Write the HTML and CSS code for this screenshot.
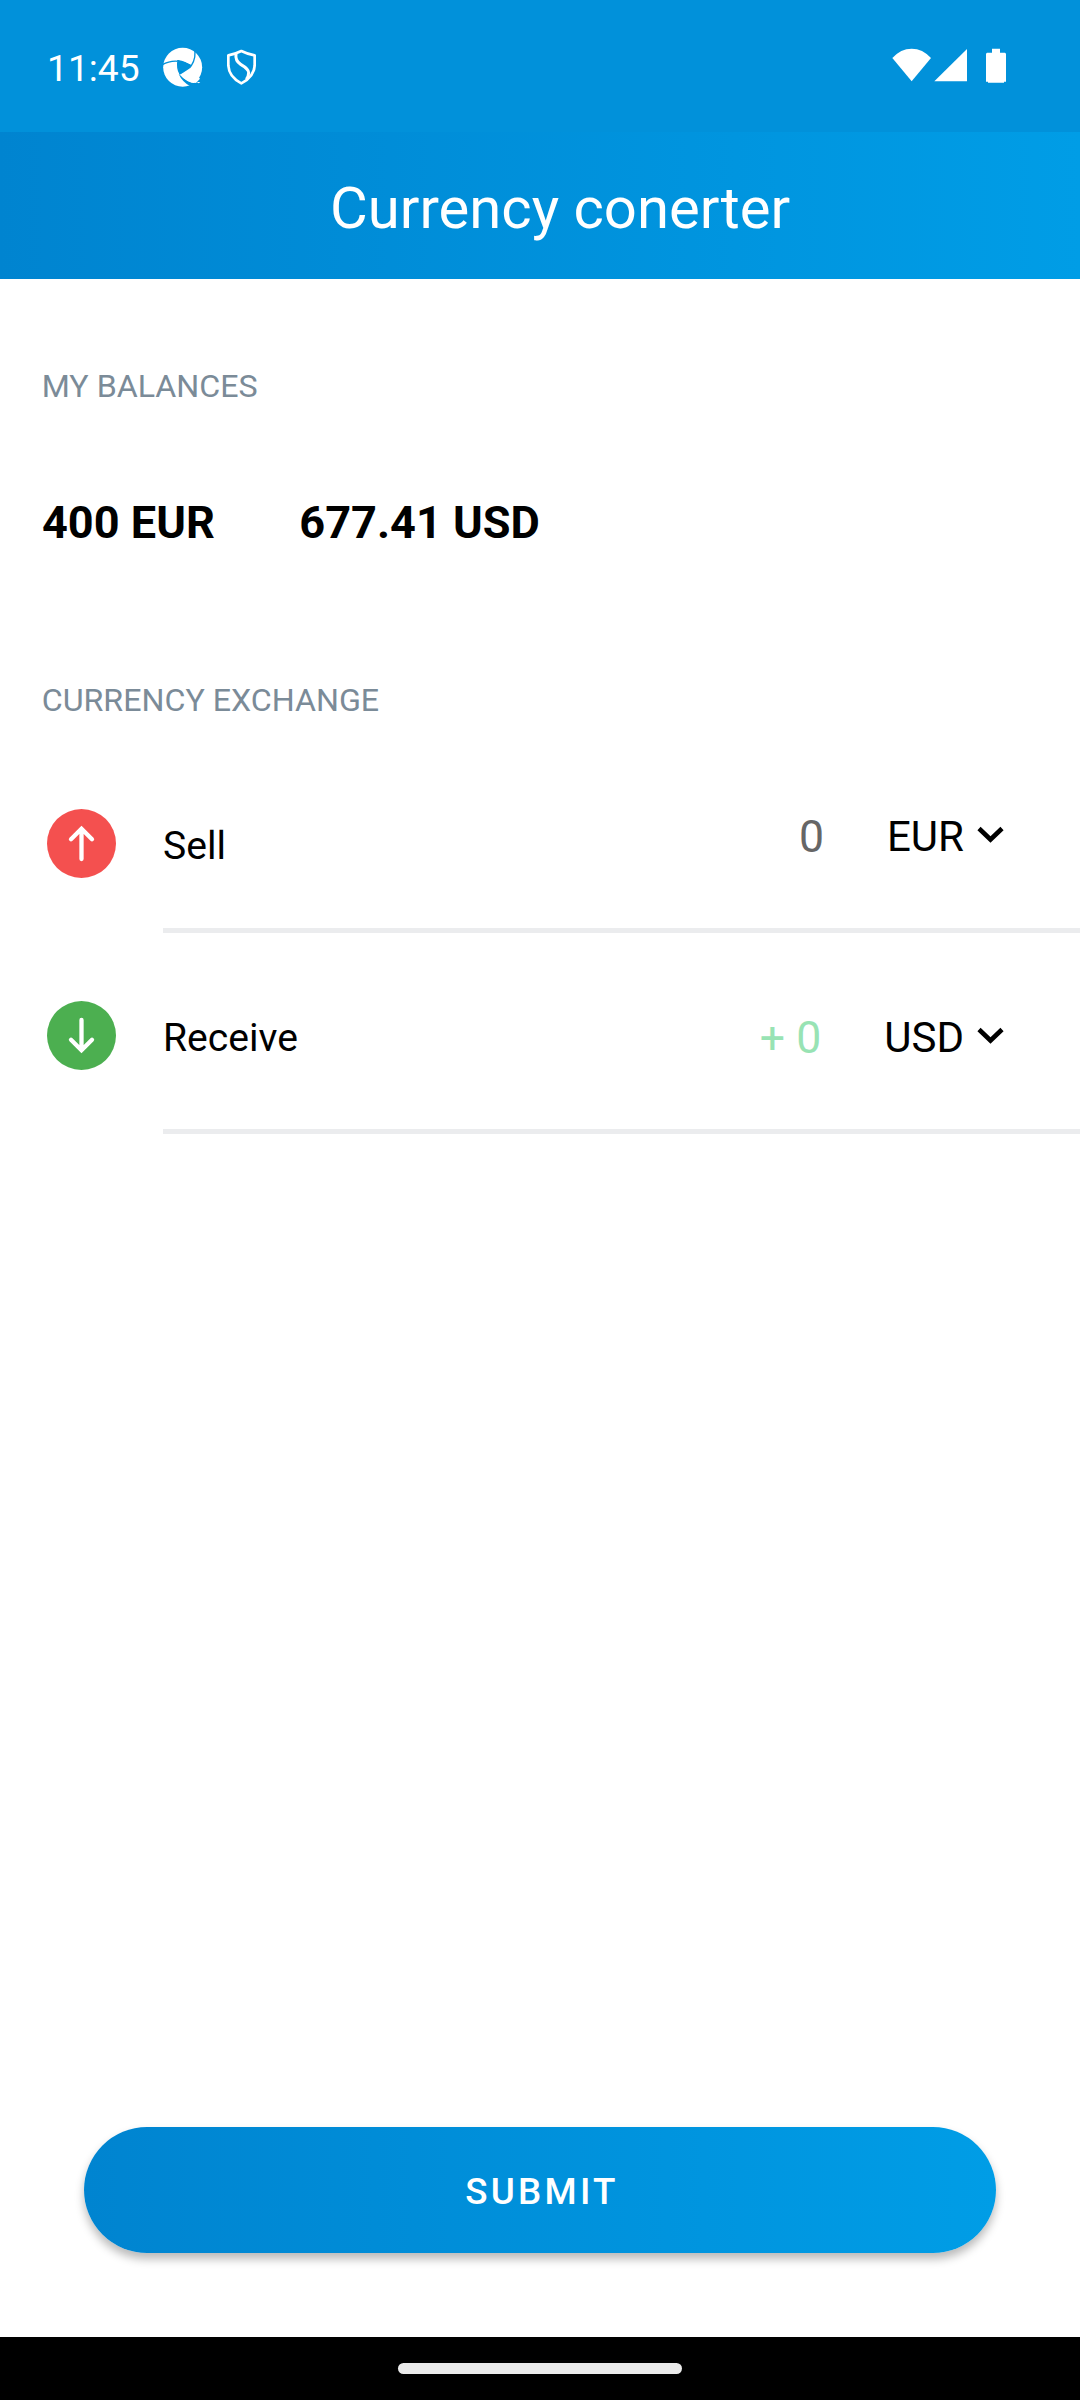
FILE: index.html
```html
<!DOCTYPE html>
<html lang="en">
<head>
<meta charset="utf-8">
<title>Currency conerter</title>
<link rel="stylesheet" href="styles.css">
</head>
<body>
<div class="screen">
  <div class="status-bar">
    <span class="clock">11:45</span>
    <svg class="icon-aperture" viewBox="480 135 135 135">
      <circle cx="548" cy="202" r="58.5" fill="#fff"/>
      <path d="M534 180 Q557 184 574 197 Q562 215 540 222 Q531 204 534 180Z" fill="#0191da"/>
      <path d="M487 194 Q527 171 574 197 M583 142 Q590 172 574 197 Q562 215 540 222 M534 180 Q530 204 540 222" fill="none" stroke="#0191da" stroke-width="4"/>
      <path d="M536 222 Q547 246 571 259 L588 250 Q560 248 540 224Z" fill="#0191da"/>
      <path d="M540 224 Q560 247 588 249 L600 236 L570 205Z" fill="#fff"/>
      <path d="M590 246 H601 L596 250Z" fill="#fff"/>
    </svg>
    <svg class="icon-shield" viewBox="675 145 99 114" fill="none" stroke="#fff" stroke-linejoin="round">
      <path d="M724 154 Q704 164 685 167 V198 Q687 232 724 251 Q762 232 764 198 V167 Q744 164 724 154Z" stroke-width="8"/>
      <path d="M708 162 Q705 184 722 194 Q746 208 746 219 Q746 229 739 239" stroke-width="9"/>
    </svg>
    <span class="spacer"></span>
    <svg class="icon-signals" viewBox="336 145 345 108" fill="#fff">
      <path d="M395 245 L337 175 Q362 147 395 147 Q428 147 453 175Z"/>
      <path d="M463 245 L561 148 V245Z"/>
      <path d="M636 147 H660 V159 H675 L678 162 V246 H672 V249 H624 V246 H618 V162 L621 159 H636Z"/>
    </svg>
  </div>

  <header class="toolbar"><h1 class="title">Currency conerter</h1></header>

  <main class="content">
    <h2 class="section-title">MY BALANCES</h2>
    <div class="balances">
      <span>400 EUR</span>
      <span>677.41 USD</span>
    </div>
    <h2 class="section-title">CURRENCY EXCHANGE</h2>

    <div class="row row-sell">
      <svg class="badge" viewBox="0 0 69 69">
        <circle cx="34.5" cy="34.5" r="34.5" fill="#f4504f"/>
        <path d="M34.5 50 V20 M24 30.3 L34.5 19.8 L45 30.3" fill="none" stroke="#fff" stroke-width="4.3" stroke-linecap="round"/>
      </svg>
      <div class="row-body">
        <span class="name">Sell</span>
        <span class="amount amount-sell">0</span>
        <span class="currency">EUR</span>
        <svg class="chevron" viewBox="0 0 27 17"><path d="M2 2.5 L13.5 13.5 L25 2.5" fill="none" stroke="#000" stroke-width="4.6"/></svg>
      </div>
    </div>

    <div class="row row-receive">
      <svg class="badge" viewBox="0 0 69 69">
        <circle cx="34.5" cy="34.5" r="34.5" fill="#4caf50"/>
        <path d="M34.5 19 V49 M24 38.7 L34.5 49.2 L45 38.7" fill="none" stroke="#fff" stroke-width="4.3" stroke-linecap="round"/>
      </svg>
      <div class="row-body">
        <span class="name">Receive</span>
        <span class="amount amount-receive">+ 0</span>
        <span class="currency">USD</span>
        <svg class="chevron" viewBox="0 0 27 17"><path d="M2 2.5 L13.5 13.5 L25 2.5" fill="none" stroke="#000" stroke-width="4.6"/></svg>
      </div>
    </div>
  </main>

  <button class="submit">SUBMIT</button>
  <div class="nav-bar"><span class="nav-handle"></span></div>
</div>
</body>
</html>
```
FILE: styles.css
```css
* { box-sizing: border-box; }
body { margin: 0; background: #fff; font-family: Roboto, sans-serif; color: #000; }
h1, h2 { margin: 0; font-weight: 400; }
svg { display: block; flex: none; }

.screen { width: 1080px; height: 2400px; display: flex; flex-direction: column; background: #fff; }

.status-bar { height: 132px; display: flex; align-items: flex-start; padding: 45px 73px 0 47px; background: #0191da; color: #fff; }
.clock { width: 113px; padding-top: 1.4px; font-size: 37.2px; line-height: 44px; }
.icon-aperture { width: 45px; height: 45px; }
.icon-shield { width: 33px; height: 38px; margin: 3px 0 0 20px; }
.spacer { flex: 1; }
.icon-signals { width: 115px; height: 36px; margin-top: 3.4px; }

.toolbar { height: 147px; padding: 42px 0 0 330px; background: linear-gradient(90deg, #0084d0, #009de6); color: #fff; }
.title { font-size: 58px; line-height: 68px; }

.content { flex: 1; }
.section-title { padding-left: 41.7px; font-size: 32.2px; line-height: 38px; color: #7b8b98; }
.content > .section-title:first-child { padding-top: 88px; }
.balances { display: flex; gap: 84.5px; padding: 88px 0 128px 42px; font-size: 45.1px; line-height: 60px; font-weight: 700; }

.row { display: flex; height: 201px; padding-left: 47px; }
.row-sell { margin-top: 13px; }
.badge { width: 69px; height: 69px; margin: 68px 47px 0 0; }
.row-sell .badge { margin-top: 77px; }
.row-body { flex: 1; display: flex; align-items: flex-start; padding-right: 76px; border-bottom: 5px solid #ebecee; }
.name { flex: 1; padding-top: 81px; font-size: 39.1px; line-height: 48px; }
.row-sell .name { padding-top: 90px; }
.amount { padding-top: 77px; font-size: 44.6px; line-height: 56px; margin-right: 63px; }
.amount-sell { color: #666; }
.amount-receive { color: #98e3b4; }
.currency { padding-top: 77px; font-size: 42px; line-height: 56px; }
.chevron { width: 27px; height: 17px; margin: 94px 0 0 13px; }

.submit { width: 912px; height: 126px; margin: 0 84px 84px; padding: 4px 0 0 4px; border: 0; border-radius: 63px; background: linear-gradient(90deg, #0084d0, #009de6); color: #fff; font: 500 36.75px/44px Roboto, sans-serif; letter-spacing: 3.28px; box-shadow: 0 6px 10px rgba(0, 0, 0, .28); }

.nav-bar { height: 63px; padding-top: 26px; display: flex; justify-content: center; background: #000; }
.nav-handle { width: 284px; height: 11px; border-radius: 6px; background: #ebebeb; }
```
